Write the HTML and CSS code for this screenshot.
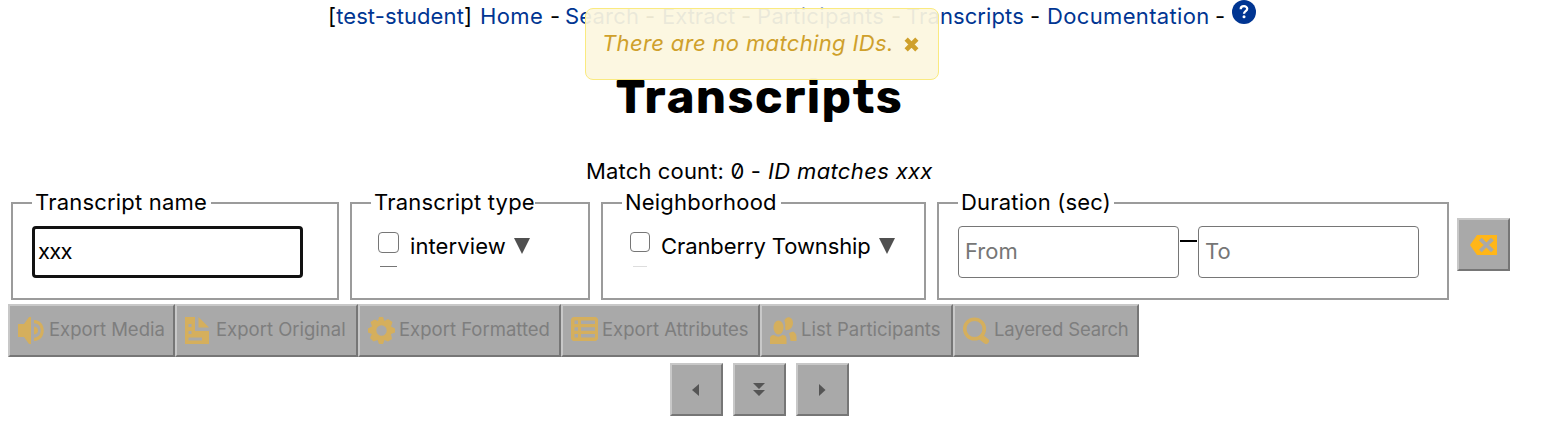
FILE: index.html
```html
<!DOCTYPE html>
<html lang="en">
<head>
<meta charset="utf-8">
<title>Transcripts</title>
<link rel="stylesheet" href="styles.css">
</head>
<body>
<nav class="menu">
<span class="user">[<a>test-student</a>]</span><a class="home">Home</a><span>-</span><a class="search">Search</a><span>-</span><a>Extract</a><span>-</span><a class="participants">Participants</a><span>-</span><a class="transcripts">Transcripts</a><span>-</span><a class="documentation">Documentation</a><span>-</span>
<svg class="help" viewBox="0 0 24 24"><circle cx="12" cy="12" r="12" fill="#003592"/><path d="M8.7 9.2C8.7 5.3 15.2 5.3 15.2 8.8C15.2 11.2 12 11 12 13.7" fill="none" stroke="#fff" stroke-width="2.3"/><circle cx="12" cy="16.8" r="1.5" fill="#fff"/></svg>
</nav>
<div class="alert"><em>There are no matching IDs.</em><svg viewBox="0 0 14 14"><path d="M2 2L12 12M12 2L2 12" stroke="#cfa02b" stroke-width="4.3"/></svg></div>
<main>
<h1>Transcripts</h1>
<p class="count"><span>Match count: 0 - </span><em>ID matches xxx</em></p>
<form class="filters">
<fieldset class="name"><legend>Transcript name</legend><input class="query" type="text" value="xxx"></fieldset>
<fieldset class="type"><legend>Transcript type</legend><div class="options"><i class="box"></i><span>interview</span><svg class="more" viewBox="0 0 16 16"><path d="M0 0H16L8 16Z" fill="#505050"/></svg></div><i class="next"></i></fieldset>
<fieldset class="hood"><legend>Neighborhood</legend><div class="options"><i class="box"></i><span>Cranberry Township</span><svg class="more" viewBox="0 0 16 16"><path d="M0 0H16L8 16Z" fill="#505050"/></svg></div><i class="next"></i></fieldset>
<fieldset class="duration"><legend>Duration (sec)</legend><div class="range"><input type="text" placeholder="From"><i class="dash"></i><input type="text" placeholder="To"></div></fieldset>
<button type="button" class="key clear"><svg viewBox="0 0 27 20"><path fill="#ffb619" fill-rule="evenodd" d="M0 10L7 0H27V20H7ZM9 5.5L13.8 10L9 14.5L11.7 17.2L16.4 12.6L21.1 17.2L23.8 14.5L19 10L23.8 5.5L21.1 2.8L16.4 7.4L11.7 2.8Z"/></svg></button>
</form>
<div class="tools">
<button class="media" disabled><svg viewBox="0 0 27 27"><path d="M0 7H6L11 0H13V27H11L6 20H0Z"/><path d="M16 9.5Q20 10 20 13.5T16 17.5ZM16 3C29 3 29 24 16 24V20.7C25 20.7 25 6.3 16 6.3Z"/></svg><span>Export Media</span></button>
<button class="original" disabled><svg viewBox="0 0 27 27"><path fill-rule="evenodd" d="M0 0H10V14H24V27H0ZM3.5 7V10H6.5V7ZM3.5 14V17H6.5V14ZM3.5 20.5V23.5H17V20.5Z"/><path d="M13.5 0V10.5H24Z"/></svg><span>Export Original</span></button>
<button class="formatted" disabled><svg viewBox="0 0 27 27"><path fill-rule="evenodd" d="M11 0H15L16.5 4L20 2L24.5 5L23 9.5L27 11.5V15.5L23 17L24 22L20 24.5L16.5 23L15 27H11L9.5 23L5.5 24.5L2 21L3.8 17L0 15.5V11.5L4 9.5L2.5 5L6.5 2.5L10 4ZM13.5 8.3A5.2 5.2 0 1 0 13.5 18.7A5.2 5.2 0 1 0 13.5 8.3Z"/></svg><span>Export Formatted</span></button>
<button class="attributes" disabled><svg viewBox="0 0 27 27"><path fill-rule="evenodd" d="M2 0H25L27 2V22L25 24H2L0 22V2ZM3.5 3.5V7H7V3.5ZM10 3.5V7H24V3.5ZM3.5 10.3V13.7H7V10.3ZM10 10.3V13.7H24V10.3ZM3.5 17V20.5H7V17ZM10 17V20.5H24V17Z"/></svg><span>Export Attributes</span></button>
<button class="people" disabled><svg viewBox="0 0 27 27"><ellipse cx="8.5" cy="10.5" rx="5" ry="7"/><path d="M14.3 3.2C17-2 23 0 23 6C23 10.500 19.500 13.500 16 13.200Q14.800 12.800 15.200 10.500Q15.500 6 14.300 3.200ZM0 27V21.500Q0 18 4 18Q8 21.500 12.500 18Q16.500 18 16.500 22V27ZM19 16L23 14.500Q26.500 16 26.500 20V24H20.500Q20 19 19 16Z"/></svg><span>List Participants</span></button>
<button class="layered" disabled><svg viewBox="0 0 27 27"><circle cx="11.5" cy="12" r="9.8" fill="none" stroke="#d5af5d" stroke-width="3.6"/><path d="M18.5 20.5L23 24" stroke="#d5af5d" stroke-width="6" stroke-linecap="round"/></svg><span>Layered Search</span></button>
</div>
<div class="pager">
<button class="key"><svg viewBox="0 0 14 14"><path d="M10 1V13L3 7Z"/></svg></button>
<button class="key"><svg viewBox="0 0 14 14"><path d="M1 0H13L7 6ZM1 7H13L7 13Z"/></svg></button>
<button class="key"><svg viewBox="0 0 14 14"><path d="M4 1V13L10.5 7Z"/></svg></button>
</div>
</main>
</body>
</html>
```
FILE: styles.css
```css
* { box-sizing: border-box; }
body { margin: 0; height: 428px; overflow: hidden; background: #fff; color: #000; font: 22px/28px Inter, "Noto Sans", sans-serif; font-feature-settings: "zero"; white-space: nowrap; position: relative; }
.menu { height: 32px; padding: 2px 0 0 328px; display: grid; grid-template-columns: 152px 70px 15px 80px 17px 79px 16px 134px 15px 124px 17px 168px 17px 24px; }
.menu a { color: #003592; }
.user { letter-spacing: .1px; }
.menu .home { letter-spacing: .4px; }
.menu .search { letter-spacing: .2px; }
.menu .participants, .menu .documentation { letter-spacing: .35px; }
.menu .transcripts { letter-spacing: .1px; }
.help { width: 24px; height: 24px; margin-top: -2px; }
.alert { position: absolute; left: 585px; top: 8px; width: 354px; height: 72px; padding: 20px 16px; border: 1px solid #faea80; border-radius: 8px; background: rgba(252, 246, 223, .93); color: #cfa02b; display: flex; gap: 10px; }
.alert svg { width: 15px; height: 15px; margin-top: 8px; }
.alert em { width: 292px; letter-spacing: .35px; }
main { width: 1518px; }
h1 { margin: 35px 0 0; height: 61px; font: 700 47px/60px Rubik, Inter, sans-serif; letter-spacing: 1.4px; padding-left: 1px; text-align: center; }
.count { margin: 29px 0 0 586px; height: 31px; display: flex; }
.count span { width: 182px; white-space: pre; letter-spacing: .15px; }
.count em { letter-spacing: .35px; }
.filters { display: flex; height: 111px; padding-left: 11px; margin-top: 1px; }
fieldset { margin: 0; padding: 0 0 0 19px; border: 2px solid #9b9b9b; min-width: 0; height: 111px; }
legend { padding: 0 3px; height: 28px; line-height: 26px; letter-spacing: .2px; }
.name { width: 328px; margin-right: 11px; }
.name legend { width: 179px; }
.type { width: 240px; margin-right: 11px; }
.type legend { width: 164px; }
.hood { width: 325px; margin-right: 11px; }
.hood legend { width: 159px; }
.duration { width: 512px; margin-right: 8px; }
.duration legend { width: 156px; }
input { display: block; width: 221px; height: 52px; margin-top: 9px; padding: 0 6px 2px; border: 1px solid #767676; border-radius: 4px; font: inherit; outline: 0; background: #fff; }
input::placeholder { color: #767676; opacity: 1; }
.query { width: 271px; border: 3px solid #111; padding: 0 3px 2px; letter-spacing: -.7px; }
.range { display: flex; }
.dash { width: 17px; height: 2px; margin: 23px 1px 0; background: #000; }
.options { display: flex; margin: 14px 0 0 7px; height: 30px; }
.box { width: 21px; height: 21px; margin: 1px 11px 0 0; border: 1.5px solid #767676; border-radius: 4px; }
.hood .box { width: 20px; height: 20px; margin: 1px 11px 0 1px; }
.options span { line-height: 30px; }
.type .options span { width: 104px; letter-spacing: .1px; }
.hood .options span { width: 218px; letter-spacing: -.1px; }
.more { width: 16px; height: 16px; margin-top: 7px; }
.next { display: block; width: 17px; height: 1px; margin: 5px 0 0 9px; background: #767676; }
.hood .next { width: 14px; margin-left: 11px; background: #ddd; }
button { background: #a9a9a9; border: 2px solid; border-color: #c8c8c8 #767676 #767676 #c8c8c8; padding: 0; font: inherit; }
.key { width: 53px; height: 53px; display: grid; place-items: center; }
.clear { margin-top: 29px; }
.clear svg { width: 27px; height: 20px; margin-top: 1px; }
.tools { display: flex; padding: 4px 0 0 8px; height: 57px; }
.tools button { height: 53px; display: flex; align-items: flex-start; color: #7e7e7e; font-size: 18.5px; line-height: 26px; padding: 11px 0 0 8px; }
.tools svg { width: 27px; height: 27px; margin-right: 4px; fill: #d5af5d; flex: none; }
.tools span { margin-top: -1px; }
.media { width: 167px; }
.original { width: 183px; }
.formatted { width: 203px; }
.attributes { width: 199px; }
.people { width: 193px; }
.layered { width: 186px; }
.layered span { letter-spacing: -.15px; }
.pager { display: flex; justify-content: center; gap: 10px; padding-top: 6px; }
.pager svg { width: 14px; height: 14px; fill: #555; }
```
